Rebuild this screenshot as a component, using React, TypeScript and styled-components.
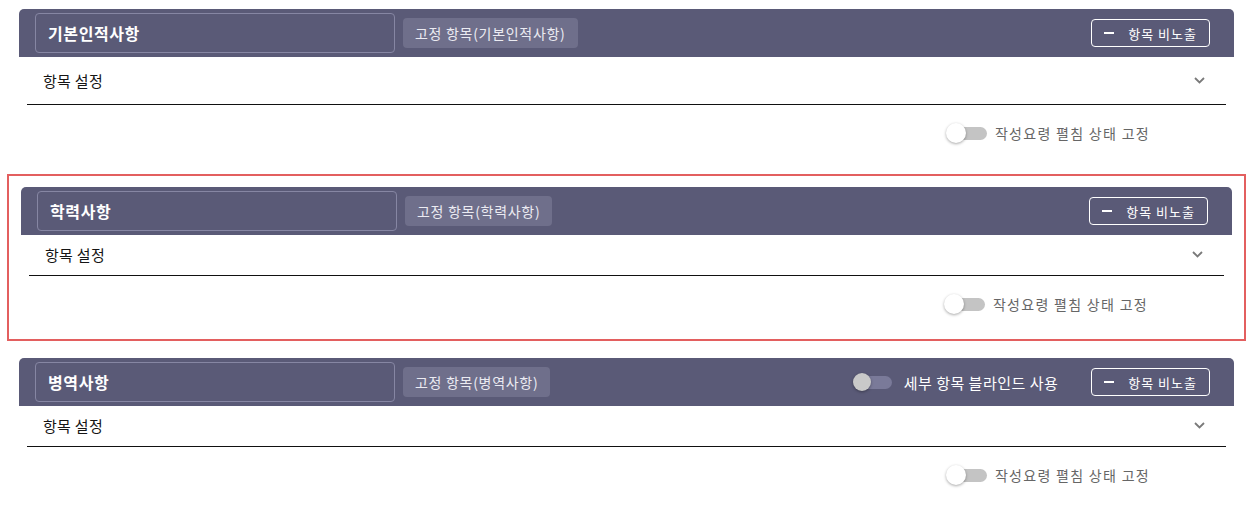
import React from 'react'
import styled, { createGlobalStyle } from 'styled-components'

const GlobalStyle = createGlobalStyle`
    html, body {
        margin: 0;
        padding: 0;
        background: #ffffff;
        overflow: hidden;
    }
    body {
        font-family: 'Noto Sans CJK KR', 'Noto Sans', sans-serif;
        color: #111111;
    }
    * {
        box-sizing: border-box;
    }
`

const Page = styled.div`
    margin-top: -4px;
    padding-left: 7px;
`

const Section = styled.section<{ $selected?: boolean }>`
    width: 1239px;
    margin-bottom: 4px;
    padding: ${(p) => (p.$selected ? '11px 12px 7px' : '13px 12px 9px')};
    border: ${(p) => (p.$selected ? '2px solid #e35f5f' : 'none')};
`

const Header = styled.div`
    display: flex;
    align-items: center;
    height: 48px;
    padding: 0 24px 0 16px;
    background: #5a5a77;
    border-radius: 5px 5px 0 0;
`

const TitleBox = styled.div`
    display: flex;
    align-items: center;
    width: 360px;
    height: 40px;
    padding-left: 12px;
    border: 1px solid #8686a3;
    border-radius: 4px;
    color: #ffffff;
    font-size: 16px;
    font-weight: 700;
    letter-spacing: 0.6px;
`

const FixedTag = styled.div`
    display: flex;
    align-items: center;
    height: 30px;
    margin-left: 8px;
    padding: 0 12px;
    background: #6f6f8b;
    border-radius: 4px;
    color: #ebebf2;
    font-size: 14px;
    letter-spacing: 0.7px;
`

const Spacer = styled.div`
    flex: 1;
`

const BlindOption = styled.div`
    display: flex;
    align-items: center;
    gap: 12px;
    margin-right: 33px;
    color: #ffffff;
    font-size: 15px;
    letter-spacing: 0.5px;
`

const HideButton = styled.button`
    display: flex;
    align-items: center;
    gap: 14px;
    height: 28px;
    padding: 0 12px;
    background: transparent;
    border: 1px solid #ffffff;
    border-radius: 4px;
    color: #ffffff;
    font-family: inherit;
    font-size: 13px;
    letter-spacing: 1px;
    cursor: pointer;
`

const Dash = styled.span`
    width: 10px;
    height: 2px;
    background: #ffffff;
`

const ItemRow = styled.div<{ $tall?: boolean }>`
    display: flex;
    align-items: center;
    justify-content: space-between;
    height: ${(p) => (p.$tall ? 48 : 41)}px;
    margin: 0 8px;
    padding: 0 21px 1px 16px;
    border-bottom: 1px solid #111111;
    font-size: 15px;
    color: #151515;
    letter-spacing: 0.3px;
`

const ToggleRow = styled.div`
    display: flex;
    align-items: center;
    justify-content: flex-end;
    gap: 8px;
    height: 56px;
    margin: 0 8px;
    padding-right: 76px;
`

const ToggleLabel = styled.span`
    font-size: 14px;
    color: #666666;
    letter-spacing: 1.3px;
`

const SwitchBox = styled.span<{ $size: number }>`
    position: relative;
    display: inline-block;
    width: ${(p) => p.$size + 21}px;
    height: ${(p) => p.$size}px;
`

const Track = styled.span<{ $color: string }>`
    position: absolute;
    left: 8px;
    right: 0;
    top: 50%;
    height: 13px;
    margin-top: -6.5px;
    border-radius: 7px;
    background: ${(p) => p.$color};
`

const Knob = styled.span<{ $size: number; $color: string }>`
    position: absolute;
    left: 0;
    top: 0;
    width: ${(p) => p.$size}px;
    height: ${(p) => p.$size}px;
    border-radius: 50%;
    background: ${(p) => p.$color};
    box-shadow: 0 1px 3px rgba(0, 0, 0, 0.35);
`

const Chevron = () => (
    <svg width="11" height="7" viewBox="0 0 11 7">
        <path d="M1 1 L5.5 5.5 L10 1" fill="none" stroke="#7a7a7a" strokeWidth="1.8" />
    </svg>
)

const Switch = ({ size, track, knob }: { size: number; track: string; knob: string }) => (
    <SwitchBox $size={size}>
        <Track $color={track} />
        <Knob $size={size} $color={knob} />
    </SwitchBox>
)

type Item = {
    title: string
    tall?: boolean
    selected?: boolean
    blind?: boolean
}

const items: Item[] = [
    { title: '기본인적사항', tall: true },
    { title: '학력사항', selected: true },
    { title: '병역사항', blind: true },
]

const App = () => {
    return (
        <>
            <GlobalStyle />
            <Page>
                {items.map((item) => (
                    <Section key={item.title} $selected={item.selected}>
                        <Header>
                            <TitleBox>{item.title}</TitleBox>
                            <FixedTag>고정 항목({item.title})</FixedTag>
                            <Spacer />
                            {item.blind && (
                                <BlindOption>
                                    <Switch size={18} track="#7a7a99" knob="#c9c9c9" />
                                    세부 항목 블라인드 사용
                                </BlindOption>
                            )}
                            <HideButton>
                                <Dash />
                                항목 비노출
                            </HideButton>
                        </Header>
                        <ItemRow $tall={item.tall}>
                            항목 설정
                            <Chevron />
                        </ItemRow>
                        <ToggleRow>
                            <Switch size={20} track="#c4c4c4" knob="#ffffff" />
                            <ToggleLabel>작성요령 펼침 상태 고정</ToggleLabel>
                        </ToggleRow>
                    </Section>
                ))}
            </Page>
        </>
    )
}

export default App
